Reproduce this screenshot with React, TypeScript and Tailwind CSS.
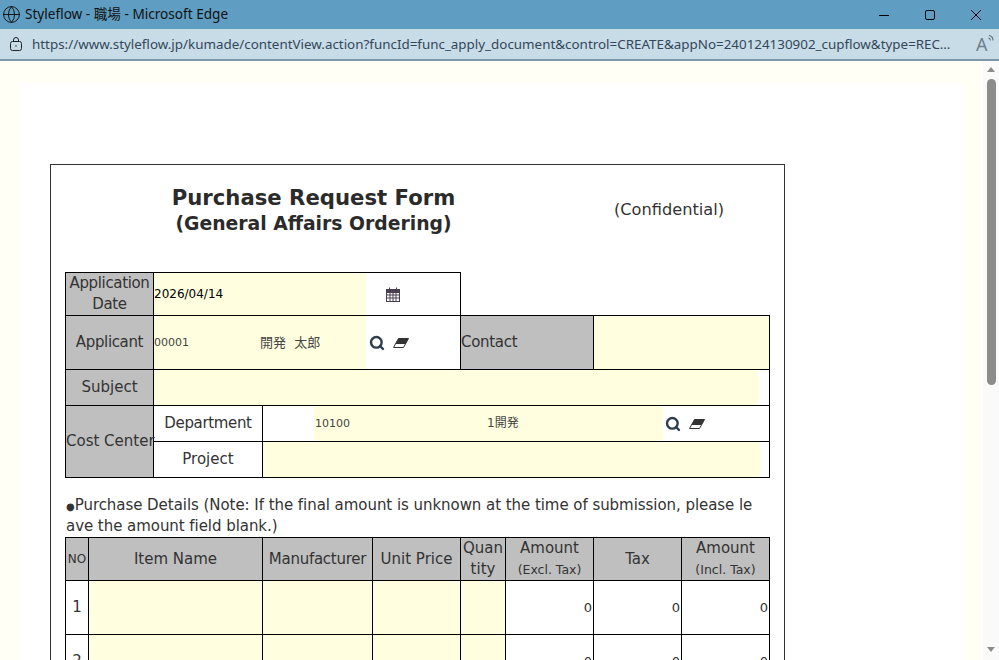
import { Globe, Search } from "lucide-react";

const font = "font-['DejaVu_Sans','Noto_Sans_CJK_JP',sans-serif]";
const head = "border border-black bg-[#bfbfbf] p-0 text-center font-normal";
const cell = "border border-black p-0 text-center font-normal";

const CalendarIcon = () => (
  <svg width="14" height="15" viewBox="0 0 14 15" fill="none" stroke="#4a3f4f" strokeWidth="1">
    <rect x="0.5" y="2.5" width="13" height="12" fill="#fff" />
    <rect x="0.5" y="2.5" width="13" height="3" fill="#4a3f4f" />
    <path d="M3.5 0.5v3M10.5 0.5v3M0.5 8h13M0.5 11h13M4 5.5v9M7 5.5v9M10 5.5v9" />
  </svg>
);

const EraserIcon = () => (
  <svg width="16" height="10" viewBox="0 0 16 10">
    <path d="M5.5 0.5H15.5L10.5 9.5H0.5Z" fill="#fff" stroke="#333" />
    <path d="M5.5 0.5H15.5L12.5 6H2.5Z" fill="#333" />
  </svg>
);

const Tools = () => (
  <div className="flex items-center gap-[8px] pl-[3px]">
    <Search size={16} strokeWidth={3.6} className="text-[#2d3f4f]" />
    <EraserIcon />
  </div>
);

const ItemRow = ({ no }: { no: number }) => (
  <tr className="h-[54px]">
    <td className={cell}>{no}</td>
    <td className={`${cell} bg-[#ffffe0]`} />
    <td className={`${cell} bg-[#ffffe0]`} />
    <td className={`${cell} bg-[#ffffe0]`} />
    <td className={`${cell} bg-[#ffffe0]`} />
    <td className={`${cell} pr-px text-right text-[13px]`}>0</td>
    <td className={`${cell} pr-px text-right text-[13px]`}>0</td>
    <td className={`${cell} pr-px text-right text-[13px]`}>0</td>
  </tr>
);

export default function App() {
  return (
    <div className="flex h-[660px] w-[999px] flex-col overflow-hidden bg-white">
      {/* Title bar */}
      <div className="flex h-[29px] shrink-0 items-center bg-[#5f9dc2] pl-[2px] text-[13.6px] text-[#111] font-['Noto_Sans','Noto_Sans_CJK_JP',sans-serif]">
        <Globe size={19} strokeWidth={1.2} />
        <span className="ml-[4px]">Styleflow - 職場 - Microsoft Edge</span>
        <div className="ml-auto flex items-center pr-[18px]">
          <svg width="10" height="10" viewBox="0 0 10 10" stroke="#000" fill="none"><path d="M0 5.5h10" /></svg>
          <svg width="10" height="10" viewBox="0 0 10 10" stroke="#000" fill="none" className="ml-[36px]"><rect x="0.5" y="0.5" width="9" height="9" rx="1.5" /></svg>
          <svg width="10" height="10" viewBox="0 0 10 10" stroke="#000" fill="none" className="ml-[36px]"><path d="M0 0l10 10M10 0L0 10" /></svg>
        </div>
      </div>

      {/* Address bar */}
      <div className="flex h-[32px] shrink-0 items-center border-b-2 border-[#7c97a8] bg-[#c8dce8] pl-[10px] text-[#33475a] font-['Noto_Sans',sans-serif]">
        <svg width="12" height="14" viewBox="0 0 12 14" fill="none" stroke="#222" strokeWidth="1">
          <rect x="0.5" y="4.5" width="11" height="9" rx="2" />
          <path d="M3.5 4.5V3a2.5 2.5 0 0 1 5 0v1.5" />
          <path d="M5.5 9h1" strokeWidth="1.5" />
        </svg>
        <span className="ml-[10px] w-[928px] truncate text-[13.4px]">
          https://www.styleflow.jp/kumade/contentView.action?funcId=func_apply_document&amp;control=CREATE&amp;appNo=240124130902_cupflow&amp;type=RECORD&amp;mode=edit
        </span>
        <div className="ml-[16px] flex items-start text-[18px] leading-none text-[#6f7f8c]">
          A
          <svg width="6" height="8" viewBox="0 0 6 8" fill="none" stroke="#5f6f7c" strokeWidth="1.1">
            <path d="M0.5 3a3 3 0 0 1 2 2.5M1 0.5a5 5 0 0 1 4 5" />
          </svg>
        </div>
      </div>

      <div className="flex min-h-0 flex-1">
        {/* Page */}
        <div className={`flex-1 bg-[#fffff5] pl-[20px] pr-[19px] pt-[22px] ${font}`}>
          <div className="h-[600px] bg-white pl-[30px] pt-[81px] text-[15px] leading-[21px] text-[#333]">
            <div className="h-[600px] w-[735px] border border-[#333] px-[14px]">
              <div className="flex h-[107px] pt-[20px]">
                <div className="w-[497px] shrink-0 text-center font-bold text-[#2b2b2b]">
                  <div className="text-[21.2px] leading-[26px]">Purchase Request Form</div>
                  <div className="text-[18.8px] leading-[25px]">(General Affairs Ordering)</div>
                </div>
                <div className="pl-[52px] pt-[14px] text-[16.2px]">(Confidential)</div>
              </div>

              {/* Application info */}
              <table className="w-[704px] table-fixed border-collapse">
                <colgroup>
                  <col className="w-[88px]" />
                  <col className="w-[109px]" />
                  <col className="w-[198px]" />
                  <col className="w-[133px]" />
                  <col className="w-[176px]" />
                </colgroup>
                <tbody>
                  <tr className="h-[43px]">
                    <th className={`${head} tracking-[-0.35px]`}>Application Date</th>
                    <td colSpan={2} className={cell}>
                      <div className="flex h-[42px]">
                        <div className="flex w-[212px] items-center bg-[#ffffe0] text-[12px] text-black">2026/04/14</div>
                        <div className="flex items-center pl-[20px]"><CalendarIcon /></div>
                      </div>
                    </td>
                  </tr>
                  <tr className="h-[54px]">
                    <th className={`${head} tracking-[-0.35px]`}>Applicant</th>
                    <td colSpan={2} className={cell}>
                      <div className="flex h-[53px]">
                        <div className="flex w-[212px] items-center bg-[#ffffe0] text-[#444]">
                          <span className="w-[106px] text-left text-[11px]">00001</span>
                          <span className="text-[13px]">開発&nbsp;&nbsp;太郎</span>
                        </div>
                        <Tools />
                      </div>
                    </td>
                    <th className={`${head} text-left tracking-[-0.3px]`}>Contact</th>
                    <td className={`${cell} bg-[#ffffe0]`} />
                  </tr>
                  <tr className="h-[36px]">
                    <th className={head}>Subject</th>
                    <td colSpan={4} className={cell}>
                      <div className="h-[35px] w-[604px] bg-[#ffffe0]" />
                    </td>
                  </tr>
                  <tr className="h-[36px]">
                    <th rowSpan={2} className={`${head} whitespace-nowrap`}>Cost Center</th>
                    <td className={`${cell} tracking-[-0.35px]`}>Department</td>
                    <td colSpan={3} className={cell}>
                      <div className="flex h-[35px] pl-[51px]">
                        <div className="flex w-[348px] items-center bg-[#ffffe0] text-[#444]">
                          <span className="w-[173px] pl-px text-left text-[11px]">10100</span>
                          <span className="text-[12px]">1開発</span>
                        </div>
                        <Tools />
                      </div>
                    </td>
                  </tr>
                  <tr className="h-[36px]">
                    <td className={cell}>Project</td>
                    <td colSpan={3} className={cell}>
                      <div className="h-[35px] w-[497px] bg-[#ffffe0]" />
                    </td>
                  </tr>
                </tbody>
              </table>

              <p className="mb-0 mt-[17px] w-[690px] break-all pl-px tracking-[-0.05px]">
                <span className="text-[10px] leading-none">●</span>Purchase Details (Note: If the final amount is unknown at the time of submission, please leave the amount field blank.)
              </p>

              {/* Purchase details */}
              <table className="w-[704px] table-fixed border-collapse">
                <colgroup>
                  <col className="w-[23px]" />
                  <col className="w-[174px]" />
                  <col className="w-[110px]" />
                  <col className="w-[88px]" />
                  <col className="w-[45px]" />
                  <col className="w-[88px]" />
                  <col className="w-[88px]" />
                  <col className="w-[88px]" />
                </colgroup>
                <tbody>
                  <tr className="h-[42px]">
                    <th className={`${head} text-[12px]`}>NO</th>
                    <th className={head}>Item Name</th>
                    <th className={`${head} tracking-[-0.25px]`}>Manufacturer</th>
                    <th className={head}>Unit Price</th>
                    <th className={`${head} break-all`}>Quantity</th>
                    <th className={head}>Amount<br /><span className="text-[12.5px]">(Excl. Tax)</span></th>
                    <th className={head}>Tax</th>
                    <th className={head}>Amount<br /><span className="text-[12.5px]">(Incl. Tax)</span></th>
                  </tr>
                  <ItemRow no={1} />
                  <ItemRow no={2} />
                </tbody>
              </table>
            </div>
          </div>
        </div>

        {/* Scrollbar */}
        <div className="flex w-[16px] shrink-0 flex-col items-center bg-[#fafafa] pt-[6px]">
          <div className="h-0 w-0 border-x-[4px] border-b-[5px] border-x-transparent border-b-[#8c8c8c]" />
          <div className="mt-[7px] h-[306px] w-[9px] rounded-[5px] bg-[#8c8c8c]" />
          <div className="mt-[262px] h-0 w-0 border-x-[4px] border-t-[5px] border-x-transparent border-t-[#8c8c8c]" />
        </div>
      </div>
    </div>
  );
}
